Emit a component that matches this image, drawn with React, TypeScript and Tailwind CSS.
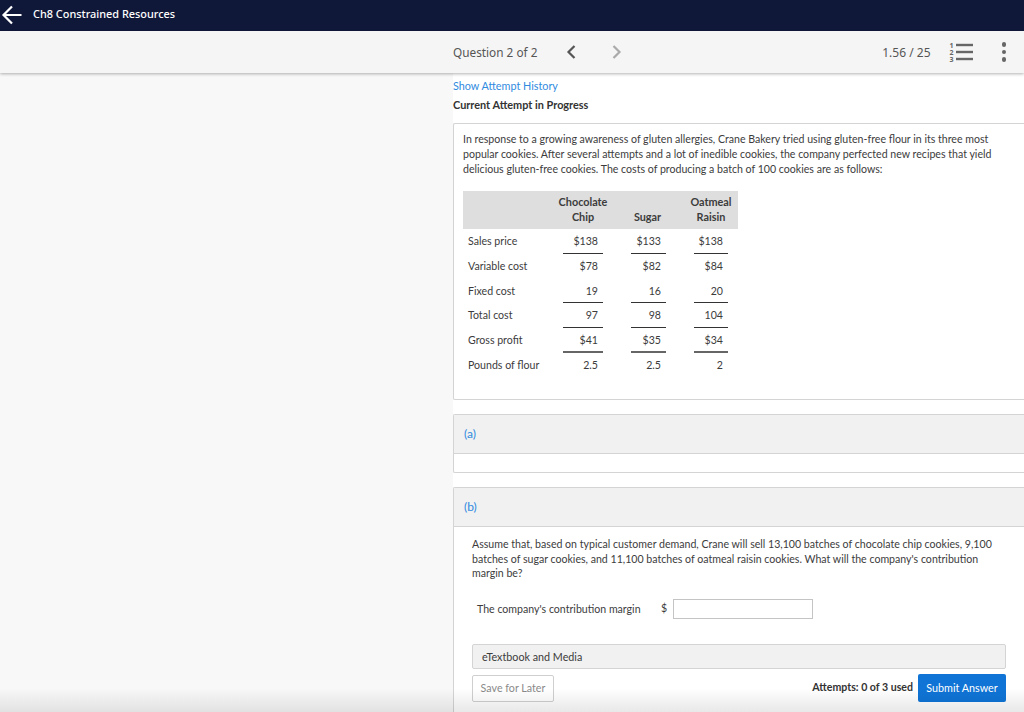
import React from "react";

const rows = [
  { label: "Sales price", values: ["$138", "$133", "$138"], line: "border-[#333]" },
  { label: "Variable cost", values: ["$78", "$82", "$84"], line: "border-transparent" },
  { label: "Fixed cost", values: ["19", "16", "20"], line: "border-[#333]" },
  { label: "Total cost", values: ["97", "98", "104"], line: "border-[#333]" },
  { label: "Gross profit", values: ["$41", "$35", "$34"], line: "border-b-2 border-[#666]" },
  { label: "Pounds of flour", values: ["2.5", "2.5", "2"], line: "border-transparent" },
];

const cellPads = ["pl-[12px] pr-[12px]", "pl-[16px] pr-[14px]", "pl-[14px] pr-[10px]"];

const App: React.FC = () => {
  return (
    <div className="relative h-[712px] w-[1024px] overflow-hidden bg-white font-['Lato',sans-serif] text-[#333]">
      <header className="flex h-[31px] items-center bg-[#10183a] pb-[2px] text-white">
        <svg width="24" height="20" viewBox="0 0 24 20" className="ml-[0px]" fill="none" stroke="white" strokeWidth="2.2">
          <path d="M21.5 10H4M12 1.5L3.5 10l8.5 8.5" />
        </svg>
        <span className="ml-[9px] font-['Noto_Sans',sans-serif] text-[10.9px] font-medium">Ch8 Constrained Resources</span>
      </header>

      <div className="relative z-10 flex h-[42px] items-center bg-[#f5f5f5] pl-[453px] pr-[18px] shadow-[0_1px_3px_rgba(0,0,0,0.3)] font-['Noto_Sans',sans-serif] text-[#555]">
        <span className="mt-[2px] text-[11.8px]">Question 2 of 2</span>
        <svg width="12" height="16" viewBox="0 0 12 16" className="ml-[28px]" fill="none" stroke="#555" strokeWidth="2.2">
          <path d="M9.5 2l-6 6 6 6" />
        </svg>
        <svg width="12" height="16" viewBox="0 0 12 16" className="ml-[34px]" fill="none" stroke="#aaa" strokeWidth="2.2">
          <path d="M2.5 2l6 6-6 6" />
        </svg>
        <span className="ml-auto mt-[2px] text-[12px]">1.56 / 25</span>
        <svg width="24" height="22" viewBox="0 0 24 22" className="ml-[18px]">
          <rect x="7" y="2.8" width="17" height="2.4" fill="#666" />
          <rect x="7" y="9.8" width="17" height="2.4" fill="#666" />
          <rect x="7" y="16.8" width="17" height="2.4" fill="#666" />
          <text x="0.5" y="6.5" fontSize="7" fontWeight="700" fill="#666">1</text>
          <text x="0.5" y="13.5" fontSize="7" fontWeight="700" fill="#666">2</text>
          <text x="0.5" y="20.5" fontSize="7" fontWeight="700" fill="#666">3</text>
        </svg>
        <div className="ml-[29px] flex flex-col gap-[3px]">
          <span className="h-[4.5px] w-[4.5px] rounded-full bg-[#666]" />
          <span className="h-[4.5px] w-[4.5px] rounded-full bg-[#666]" />
          <span className="h-[4.5px] w-[4.5px] rounded-full bg-[#666]" />
        </div>
      </div>

      <div className="flex h-[639px]">
        <aside className="w-[453px] shrink-0 bg-[#f8f8f8]" />
        <main className="min-w-0 flex-1 bg-white">
          <p className="mt-[5px] text-[10.8px] leading-[16px] text-[#2f8ae0]">Show Attempt History</p>
          <p className="mt-[3px] text-[10.9px] font-bold leading-[16px] text-[#333]">Current Attempt in Progress</p>

          <section className="mt-[10px] h-[277px] rounded-l-[2px] border-y border-l border-[#d4d4d4] pl-[9px] pr-[20px] pt-[8px]">
            <p className="text-[10.6px] leading-[15px] text-[#3c3c3c]">
              In response to a growing awareness of gluten allergies, Crane Bakery tried using gluten-free flour in its three most popular cookies. After several attempts and a lot of inedible cookies, the company perfected new recipes that yield delicious gluten-free cookies. The costs of producing a batch of 100 cookies are as follows:
            </p>
            <table className="mt-[14px] w-[275px] table-fixed border-collapse text-[10.6px] text-[#3c3c3c]">
              <thead>
                <tr className="h-[38px] bg-[#dedede] text-[10.85px] font-bold leading-[14.5px]">
                  <th className="w-[88px]" />
                  <th className="w-[64px] align-bottom pb-[5px] font-bold">Chocolate<br />Chip</th>
                  <th className="w-[65px] align-bottom pb-[5px] font-bold">Sugar</th>
                  <th className="w-[58px] align-bottom pb-[5px] pl-[4px] font-bold">Oatmeal<br />Raisin</th>
                </tr>
              </thead>
              <tbody>
                {rows.map((row) => (
                  <tr key={row.label} className="h-[24.8px]">
                    <td className="pl-[5px] pt-[1px]">{row.label}</td>
                    {row.values.map((v, i) => (
                      <td key={i} className={cellPads[i]}>
                        <div className={`h-[24.8px] border-b pr-[5px] pt-[5px] text-right leading-[14px] ${row.line}`}>{v}</div>
                      </td>
                    ))}
                  </tr>
                ))}
              </tbody>
            </table>
          </section>

          <section className="mt-[14px] rounded-l-[2px] border-y border-l border-[#d4d4d4]">
            <div className="flex h-[39px] items-center border-b border-[#d4d4d4] bg-[#f1f1f1] pl-[10px] text-[12px] text-[#2f8ae0]">(a)</div>
            <div className="h-[18px]" />
          </section>

          <section className="mt-[14px] h-[240px] rounded-l-[2px] border-y border-l border-[#d4d4d4]">
            <div className="flex h-[39px] items-center border-b border-[#d4d4d4] bg-[#f1f1f1] pl-[10px] text-[12px] text-[#2f8ae0]">(b)</div>
            <div className="pl-[18px] pr-[18px]">
              <p className="mt-[10px] text-[10.6px] leading-[14.5px] text-[#3c3c3c]">
                Assume that, based on typical customer demand, Crane will sell 13,100 batches of chocolate chip cookies, 9,100 batches of sugar cookies, and 11,100 batches of oatmeal raisin cookies. What will the company's contribution margin be?
              </p>
              <div className="mt-[18.5px] flex h-[20px] items-center pl-[5px] text-[10.6px] text-[#3c3c3c]">
                <span className="mt-[2px] w-[184px]">The company's contribution margin</span>
                <span className="w-[12px]">$</span>
                <div className="h-[20px] w-[140px] border border-[#c4c4c4] bg-white" />
              </div>
              <div className="mt-[25px] flex h-[25px] items-center rounded-[2px] border border-[#d4d4d4] bg-[#f1f1f1] pl-[9px] pt-[1px] text-[10.75px] text-[#3c3c3c]">eTextbook and Media</div>
              <div className="mt-[5px] flex items-center">
                <button className="h-[27px] w-[82px] rounded-[2px] border border-[#cfcfcf] bg-white text-[10.7px] text-[#8a8a8a]">Save for Later</button>
                <span className="ml-auto text-[10.6px] font-bold text-[#333]">Attempts: 0 of 3 used</span>
                <button className="ml-[5px] h-[28px] w-[88px] rounded-[2px] bg-[#0f74d6] text-[10.75px] text-white">Submit Answer</button>
              </div>
            </div>
          </section>
        </main>
      </div>

      <div className="pointer-events-none absolute inset-x-0 bottom-0 h-[24px] bg-gradient-to-b from-transparent to-[rgba(0,0,0,0.09)]" />
    </div>
  );
};

export default App;
